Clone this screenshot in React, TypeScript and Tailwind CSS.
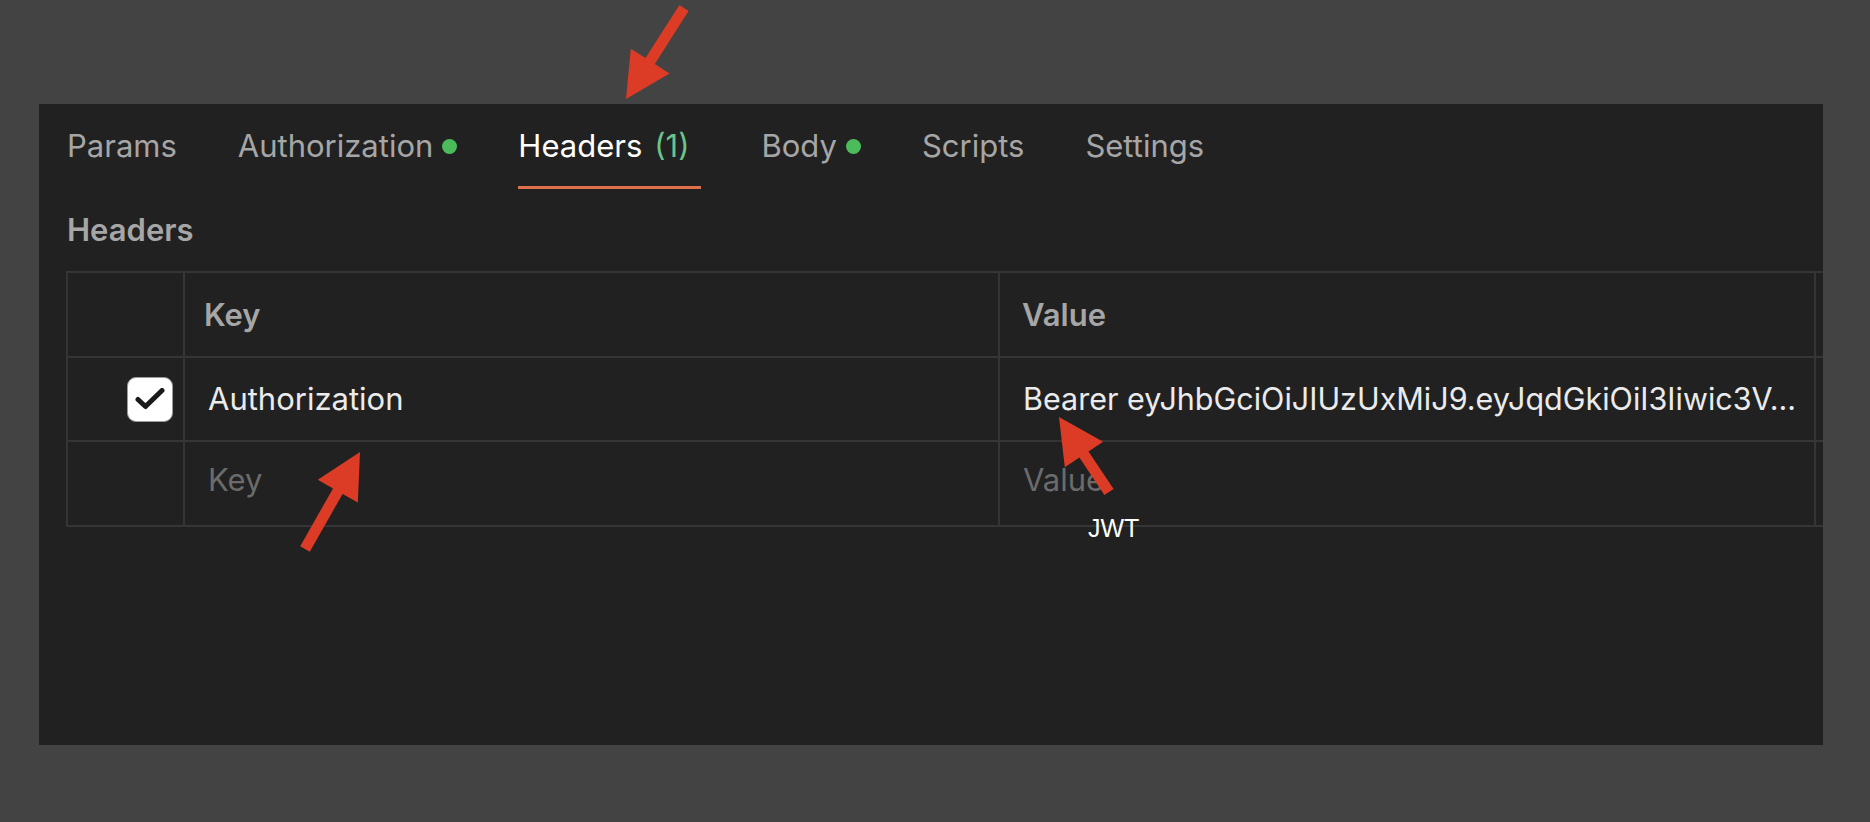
import React from "react";

type Pt = [number, number];

function arrowPoints(tail: Pt, tip: Pt, shaft = 11, headLen = 45, headW = 46): string {
  const dx = tip[0] - tail[0];
  const dy = tip[1] - tail[1];
  const len = Math.hypot(dx, dy);
  const ux = dx / len;
  const uy = dy / len;
  const nx = -uy;
  const ny = ux;
  const bx = tip[0] - ux * headLen;
  const by = tip[1] - uy * headLen;
  const pts: Pt[] = [
    [tail[0] + (nx * shaft) / 2, tail[1] + (ny * shaft) / 2],
    [bx + (nx * shaft) / 2, by + (ny * shaft) / 2],
    [bx + (nx * headW) / 2, by + (ny * headW) / 2],
    tip,
    [bx - (nx * headW) / 2, by - (ny * headW) / 2],
    [bx - (nx * shaft) / 2, by - (ny * shaft) / 2],
    [tail[0] - (nx * shaft) / 2, tail[1] - (ny * shaft) / 2],
  ];
  return pts.map((p) => `${p[0].toFixed(1)},${p[1].toFixed(1)}`).join(" ");
}

const arrows: { tail: Pt; tip: Pt }[] = [
  { tail: [684, 8], tip: [626, 99] },
  { tail: [305, 549], tip: [360, 452] },
  { tail: [1109, 492], tip: [1059, 417] },
];

function Dot() {
  return <span className="ml-[9px] inline-block h-[15px] w-[15px] rounded-full bg-[#4cbb5c]" />;
}

function Tab({ label, active, children, extra }: { label: string; active?: boolean; children?: React.ReactNode; extra?: string }) {
  return (
    <div
      className={`flex items-center border-b-[3px] pb-[22px] pt-[24px] ${
        active ? "border-[#e0704a] text-white" : "border-transparent text-[#a6a6a6]"
      } ${extra ?? ""}`}
    >
      <span className="whitespace-nowrap">{label}</span>
      {children}
    </div>
  );
}

function CheckBox() {
  return (
    <div className="flex h-[45px] w-[46px] items-center justify-center rounded-[9px] border border-[#9a9a9a] bg-white">
      <svg width="30" height="22" viewBox="0 0 30 22" fill="none">
        <path d="M3 11.5 L10.5 18.5 L27 2.5" stroke="#1a1a1a" strokeWidth="5" strokeLinecap="round" strokeLinejoin="round" />
      </svg>
    </div>
  );
}

export default function App() {
  return (
    <div className="relative h-[822px] w-full overflow-hidden bg-[#434343] pl-[39px] pt-[104px] font-['Inter',sans-serif]">
      <div className="h-[641px] w-[1784px] overflow-hidden bg-[#212121] pl-[26px] text-[31px] leading-[36px]">
        <div className="flex gap-[61px] pl-[2px]">
          <Tab label="Params" />
          <Tab label="Authorization">
            <Dot />
          </Tab>
          <Tab label="Headers" active extra="pr-[11px] -mr-[11px]">
            <span className="ml-[12px] text-[#6bc58a]">(1)</span>
          </Tab>
          <Tab label="Body" extra="ml-[11px]">
            <Dot />
          </Tab>
          <Tab label="Scripts" />
          <Tab label="Settings" />
        </div>

        <div className="mt-[23px] pl-[2px] font-semibold text-[#a6a6a6]">Headers</div>

        <div className="ml-[1px] mt-[23px] w-[1900px] border-l-2 border-t-2 border-[#353535]">
          <div className="flex h-[85px]">
            <div className="w-[117px] shrink-0 border-b-2 border-r-2 border-[#353535]" />
            <div className="flex w-[815px] shrink-0 items-center border-b-2 border-r-2 border-[#353535] pl-[19px] font-semibold text-[#a6a6a6]">
              Key
            </div>
            <div className="flex w-[816px] shrink-0 items-center border-b-2 border-r-2 border-[#353535] pl-[22px] font-semibold text-[#a6a6a6]">
              Value
            </div>
            <div className="flex-1 border-b-2 border-[#353535]" />
          </div>
          <div className="flex h-[84px]">
            <div className="flex w-[117px] shrink-0 items-center justify-end border-b-2 border-r-2 border-[#353535] pr-[10px]">
              <CheckBox />
            </div>
            <div className="flex w-[815px] shrink-0 items-center border-b-2 border-r-2 border-[#353535] pl-[23px] text-[#ebebeb]">
              Authorization
            </div>
            <div className="flex w-[816px] shrink-0 items-center whitespace-nowrap border-b-2 border-r-2 border-[#353535] pl-[23px] text-[30.5px] text-[#ebebeb]">
              Bearer eyJhbGciOiJIUzUxMiJ9.eyJqdGkiOiI3Iiwic3V...
            </div>
            <div className="flex-1 border-b-2 border-[#353535]" />
          </div>
          <div className="flex h-[85px]">
            <div className="w-[117px] shrink-0 border-b-2 border-r-2 border-[#353535]" />
            <div className="flex w-[815px] shrink-0 items-center border-b-2 border-r-2 border-[#353535] pb-[8px] pl-[23px] text-[#6b6b6b]">
              Key
            </div>
            <div className="flex w-[816px] shrink-0 items-center border-b-2 border-r-2 border-[#353535] pb-[8px] pl-[23px] text-[#6b6b6b]">
              Value
            </div>
            <div className="flex-1 border-b-2 border-[#353535]" />
          </div>
        </div>
      </div>

      <div className="absolute left-[1088px] top-[513px] font-['Liberation_Sans',Arial,sans-serif] text-[25px] leading-[30px] text-white">
        JWT
      </div>

      <svg className="pointer-events-none absolute inset-0" width="1870" height="822">
        {arrows.map((a, i) => (
          <polygon key={i} points={arrowPoints(a.tail, a.tip)} fill="#dc3b26" />
        ))}
      </svg>
    </div>
  );
}
